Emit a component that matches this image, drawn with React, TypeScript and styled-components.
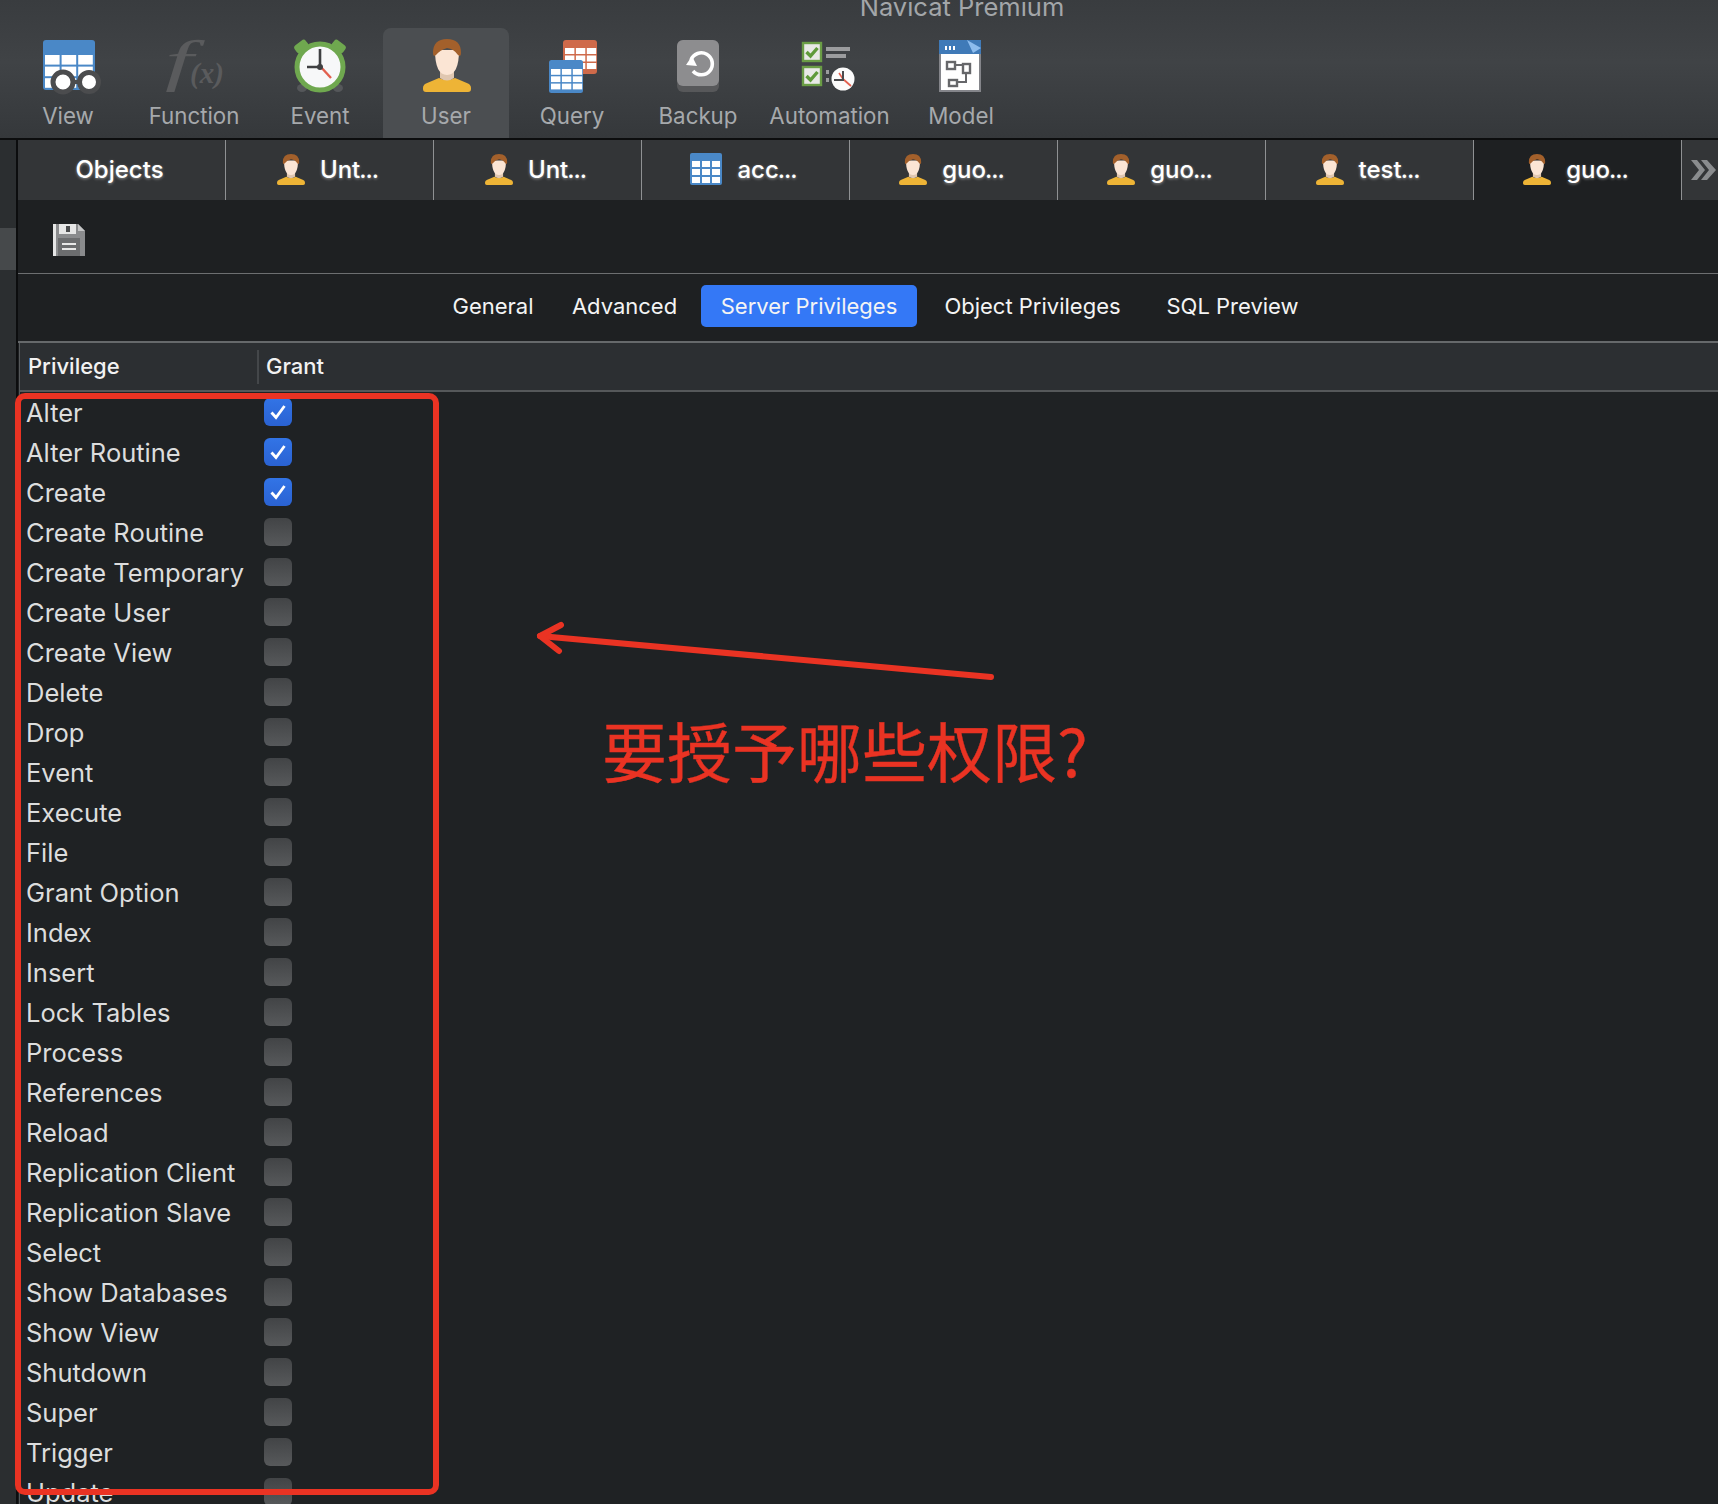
import React from "react";
import styled, { createGlobalStyle } from "styled-components";

const SANS = `Inter, "Noto Sans", "Liberation Sans", "Noto Sans CJK SC", sans-serif`;

const Global = createGlobalStyle`
  html, body { margin: 0; padding: 0; background: #1f2224; }
  * { box-sizing: border-box; }
`;

const Page = styled.div`
  position: relative;
  width: 1718px;
  height: 1504px;
  overflow: hidden;
  background: #1e2022;
  font-family: ${SANS};
`;

const Toolbar = styled.header`
  height: 140px;
  display: flow-root;
  background: linear-gradient(180deg, #393c3f 0%, #404346 45%, #35383b 100%);
  border-bottom: 2px solid #0c0d0e;
`;

const WindowTitle = styled.div`
  height: 22px;
  margin-top: -6px;
  margin-bottom: 12px;
  padding-left: 206px;
  text-align: center;
  font-size: 25.5px;
  line-height: 26px;
  color: #a3a6a9;
`;

const ToolRow = styled.div`
  display: flex;
  padding-left: 5px;
  height: 110px;
`;

const ToolItem = styled.div<{ $w: number; $active?: boolean }>`
  width: ${(p) => p.$w}px;
  height: 110px;
  padding-top: 10px;
  display: flex;
  flex-direction: column;
  align-items: center;
  border-radius: 8px 8px 0 0;
  background: ${(p) => (p.$active ? "#4b4e51" : "transparent")};
`;

const ToolLabel = styled.span`
  margin-top: 8px;
  font-size: 22.3px;
  line-height: 28px;
  color: #a6a9ac;
  white-space: nowrap;
`;

const Main = styled.div`
  display: flex;
  height: 1364px;
`;

const Rail = styled.aside`
  width: 18px;
  flex: none;
  background: #2b2e30;
  border-right: 2px solid #0c0d0e;
  padding-top: 88px;
`;

const RailHandle = styled.div`
  height: 42px;
  background: #46494b;
`;

const Content = styled.main`
  flex: 1;
  min-width: 0;
  display: flex;
  flex-direction: column;
`;

const TabBar = styled.nav`
  display: flex;
  flex: none;
  height: 60px;
  background: #333537;
`;

const Tab = styled.div<{ $active?: boolean }>`
  width: 208px;
  flex: none;
  display: flex;
  align-items: center;
  justify-content: center;
  gap: 15px;
  padding: 0 4px 2px 0;
  border-right: 1px solid #8f9193;
  background: ${(p) => (p.$active ? "#1e2022" : "transparent")};
  color: #fff;
  font-size: 24px;
  font-weight: 500;
  text-shadow: 0 1px 3px rgba(255, 255, 255, 0.45);
`;

const TabDots = styled.span`
  letter-spacing: -1px;
  margin-left: -1px;
`;

const TabMore = styled.div`
  flex: 1;
  display: flex;
  align-items: center;
  padding-left: 8px;
`;

const SaveBar = styled.div`
  flex: none;
  height: 74px;
  padding: 24px 0 0 35px;
  border-bottom: 1px solid #6d6f71;
`;

const SegmentRow = styled.div`
  flex: none;
  height: 69px;
  display: flex;
  align-items: center;
  padding: 0 0 4px 414px;
  border-bottom: 2px solid #66696b;
`;

const Segment = styled.div<{ $w: number; $ml?: number; $on?: boolean }>`
  width: ${(p) => p.$w}px;
  margin-left: ${(p) => p.$ml ?? 0}px;
  height: 42px;
  display: flex;
  align-items: center;
  justify-content: center;
  border-radius: 5px;
  font-size: 22px;
  color: #f4f4f4;
  white-space: nowrap;
  background: ${(p) => (p.$on ? "#3478f6" : "transparent")};
`;

const Table = styled.section`
  margin-left: 1px;
  border-left: 1px solid #55585a;
  flex: 1;
  min-height: 0;
  overflow: hidden;
  background: #1f2224;
`;

const HeadRow = styled.div`
  height: 49px;
  display: flex;
  align-items: center;
  background: #2c2f32;
  border-bottom: 2px solid #55585a;
`;

const HeadCell = styled.div<{ $w?: number; $divider?: boolean }>`
  width: ${(p) => (p.$w ? `${p.$w}px` : "auto")};
  height: 34px;
  line-height: 32px;
  padding-left: ${(p) => (p.$divider ? "7px" : "8px")};
  border-left: ${(p) => (p.$divider ? "2px solid #44474a" : "none")};
  font-size: 22px;
  font-weight: 500;
  color: #f2f2f2;
`;

const Row = styled.div`
  height: 40px;
  display: flex;
  align-items: center;
  padding-left: 6px;
`;

const RowName = styled.div`
  width: 238px;
  flex: none;
  padding-top: 2px;
  font-size: 25.5px;
  line-height: 38px;
  color: #dcdddd;
  white-space: nowrap;
`;

const Check = styled.div<{ $on?: boolean }>`
  width: 28px;
  height: 28px;
  flex: none;
  display: flex;
  align-items: center;
  justify-content: center;
  border-radius: 6px;
  background: ${(p) =>
    p.$on
      ? "linear-gradient(180deg, #3274e6 0%, #2a62d2 100%)"
      : "linear-gradient(180deg, #424446 0%, #57595b 100%)"};
`;

const RedFrame = styled.div`
  position: absolute;
  left: 15px;
  top: 393px;
  width: 424px;
  height: 1102px;
  border: 6px solid #ea3323;
  border-radius: 10px;
`;

const ArrowDrawing = styled.svg`
  position: absolute;
  left: 530px;
  top: 615px;
`;

const Note = styled.div`
  position: absolute;
  left: 602px;
  top: 702px;
  font-family: "Noto Sans CJK SC", sans-serif;
  font-size: 65px;
  font-weight: 400;
  -webkit-text-stroke: 0.35px #ea3323;
  line-height: 94px;
  color: #ea3323;
  white-space: nowrap;
`;

const CellGrid = ({ x, y, cols, rows, w, h, gap = 2 }: { x: number; y: number; cols: number; rows: number; w: number; h: number; gap?: number }) => (
  <>
    {Array.from({ length: rows }).flatMap((_, r) =>
      Array.from({ length: cols }).map((__, c) => (
        <rect key={`${r}-${c}`} x={x + c * (w + gap)} y={y + r * (h + gap)} width={w} height={h} fill="#fff" />
      ))
    )}
  </>
);

const Icon = ({ children }: { children: React.ReactNode }) => (
  <svg width="64" height="56" viewBox="0 0 64 56" style={{ overflow: "visible" }}>{children}</svg>
);

const ViewIcon = () => (
  <Icon>
    <rect x="7" y="2" width="52" height="50" rx="3" fill="#4a88c7" />
    <CellGrid x={9} y={17} cols={3} rows={3} w={14.6} h={9.6} gap={2} />
    <rect x="30" y="42" width="18" height="4" fill="#4b4c4e" />
    <circle cx="27" cy="44" r="10" fill="#fff" stroke="#4b4c4e" strokeWidth="5" />
    <circle cx="53" cy="44" r="9.5" fill="#fff" stroke="#4b4c4e" strokeWidth="5" />
  </Icon>
);

const FunctionIcon = () => (
  <Icon>
    <text transform="translate(3 42) scale(1.75 1)" fontFamily="'Liberation Serif', serif" fontStyle="italic" fontSize="58" fill="#5a5b5d">f</text>
    <text x="28" y="44.5" fontFamily="'Liberation Serif', serif" fontStyle="italic" fontSize="29" fontWeight="bold" fill="#5a5b5d">(x)</text>
  </Icon>
);

const EventIcon = () => (
  <Icon>
    <ellipse cx="14" cy="50" rx="5" ry="4" fill="#55575a" />
    <ellipse cx="50" cy="50" rx="5" ry="4" fill="#55575a" />
    <rect x="6" y="4" width="14" height="9" rx="3" transform="rotate(-38 13 8)" fill="#6fa84f" />
    <rect x="44" y="4" width="14" height="9" rx="3" transform="rotate(38 51 8)" fill="#6fa84f" />
    <circle cx="32" cy="29" r="23" fill="#f7f8f9" stroke="#6fa84f" strokeWidth="5" />
    <path d="M32 28 L43 40" stroke="#e2604f" strokeWidth="2.4" />
    <path d="M32 11 V29 H19" stroke="#3f4042" strokeWidth="2.6" fill="none" />
    <circle cx="32" cy="29" r="3" fill="#3f4042" />
  </Icon>
);

const UserShape = () => (
  <>
    <path d="M9 50 Q9 47 12 45.5 L25 40 Q33 44 41 40 L54 45.5 Q57 47 57 50 V51 Q57 54 54 54 H12 Q9 54 9 51 Z" fill="#eeb436" />
    <path d="M26 32 H40 V40 Q33 45 26 40 Z" fill="#e0c7b0" />
    <path d="M21 12 Q21 37 33 37 Q45 37 45 12 Z" fill="#fbe5d4" />
    <path d="M19 15 Q19 1 33 1 Q47 1 47 15 Q47 17 46 18 L44 17 Q40 11 33 10 Q26 12 22 17 L20 18 Q19 17 19 15 Z" fill="#a3602b" />
  </>
);

const UserIcon = () => <Icon><UserShape /></Icon>;

const TabUserIcon = () => (
  <svg width="28" height="31" viewBox="9 1 48 53"><UserShape /></svg>
);

const TabTableIcon = () => (
  <svg width="32" height="32" viewBox="0 0 32 32">
    <rect width="32" height="32" rx="2" fill="#4a88c7" />
    <CellGrid x={2} y={8} cols={3} rows={3} w={8} h={6} gap={2} />
  </svg>
);

const QueryIcon = () => (
  <Icon>
    <rect x="23" y="2" width="34" height="34" rx="3" fill="#cf6a4a" />
    <CellGrid x={25} y={10} cols={3} rows={3} w={9.4} h={6} gap={1.5} />
    <rect x="9" y="22" width="34" height="33" rx="2.5" fill="#4a88c7" />
    <CellGrid x={11} y={31} cols={3} rows={3} w={9.4} h={5.8} gap={1.5} />
  </Icon>
);

const BackupIcon = () => (
  <Icon>
    <rect x="11" y="2" width="42" height="52" rx="6" fill="#57585a" />
    <rect x="11" y="2" width="42" height="46" rx="6" fill="#8d8d8f" />
    <path d="M25 22 A11 11 0 1 1 27 33" fill="none" stroke="#fff" strokeWidth="3.6" />
    <path d="M20 27 L26 18 L31 28 Z" fill="#fff" />
  </Icon>
);

const CheckBox = ({ y }: { y: number }) => (
  <>
    <rect x="3" y={y} width="18" height="18" fill="#e8e9e6" stroke="#6a9d45" strokeWidth="2.4" />
    <path d={`M6.5 ${y + 9} L10.5 ${y + 13} L17.5 ${y + 5}`} fill="none" stroke="#5f9a3a" strokeWidth="3.4" />
  </>
);

const AutomationIcon = () => (
  <Icon>
    <g transform="translate(2 0)">
      <CheckBox y={5} />
      <CheckBox y={29} />
      <rect x="26" y="9" width="24" height="4" fill="#9b9c9e" />
      <rect x="26" y="16" width="20" height="4" fill="#9b9c9e" />
      <rect x="26" y="32" width="3" height="4" fill="#9b9c9e" />
      <rect x="26" y="40" width="3" height="4" fill="#9b9c9e" />
      <circle cx="43" cy="41" r="11.5" fill="#fbfbfb" />
      <path d="M43 41 L51 48" stroke="#e2604f" strokeWidth="1.8" />
      <path d="M43 41 L39 35" stroke="#e2604f" strokeWidth="1.6" />
      <path d="M43 33 V42 H34" stroke="#4a4b4d" strokeWidth="2" fill="none" />
    </g>
  </Icon>
);

const ModelIcon = () => (
  <Icon>
    <g transform="translate(-1 0)">
      <rect x="11" y="2" width="42" height="52" fill="#84858a" />
      <rect x="13" y="15" width="38" height="37" fill="#fff" />
      <rect x="11" y="2" width="42" height="14" fill="#3f7ab8" />
      <path d="M39 2 L53 10 L45 15 Z" fill="#8cbcee" />
      <rect x="17" y="8" width="2" height="4" fill="#fff" />
      <rect x="21" y="8" width="2" height="4" fill="#fff" />
      <rect x="25" y="8" width="2" height="4" fill="#fff" />
      <g fill="none" stroke="#66676a" strokeWidth="2.4">
        <rect x="19" y="24" width="8" height="7" />
        <rect x="35" y="26" width="7" height="9" />
        <rect x="21" y="42" width="8" height="6" />
        <path d="M27 27 H35 M38 35 V44 H29" strokeWidth="2" />
      </g>
    </g>
  </Icon>
);

const SaveIcon = () => (
  <svg width="32" height="32" viewBox="0 0 32 32" style={{ display: "block" }}>
    <path fill="#8a8b8d" d="M0 0 H25 L32 7 V32 H0 Z" />
    <rect x="0" y="0" width="3" height="32" fill="#e6e6e6" />
    <path d="M25 0 L32 7 H25 Z" fill="#c4c4c5" />
    <rect x="6" y="0" width="17" height="10" fill="#e6e6e6" />
    <rect x="13" y="2" width="4" height="6" fill="#4a4b4d" />
    <rect x="5" y="14" width="22" height="18" fill="#6c6d6f" />
    <path d="M9 20 H23 M9 25 H23" stroke="#e8e8e8" strokeWidth="2" />
  </svg>
);

const Tick = () => (
  <svg width="20" height="20" viewBox="0 0 20 20">
    <path d="M3.5 10.5 L8 15.5 L16.5 4" fill="none" stroke="#fff" strokeWidth="2.8" />
  </svg>
);

const Chevrons = () => (
  <svg width="28" height="24" viewBox="0 0 28 24">
    <path d="M1 2 H7 L15 12 L7 22 H1 L9 12 Z M11 2 H17 L26 12 L17 22 H11 L19 12 Z" fill="#8a8c8e" />
  </svg>
);

const tools = [
  { label: "View", w: 126, icon: <ViewIcon /> },
  { label: "Function", w: 126, icon: <FunctionIcon /> },
  { label: "Event", w: 126, icon: <EventIcon /> },
  { label: "User", w: 126, icon: <UserIcon />, active: true },
  { label: "Query", w: 126, icon: <QueryIcon /> },
  { label: "Backup", w: 126, icon: <BackupIcon /> },
  { label: "Automation", w: 137, icon: <AutomationIcon /> },
  { label: "Model", w: 126, icon: <ModelIcon /> },
];

const tabs = [
  { label: "Objects" },
  { label: "Unt", cut: true, icon: <TabUserIcon /> },
  { label: "Unt", cut: true, icon: <TabUserIcon /> },
  { label: "acc", cut: true, icon: <TabTableIcon /> },
  { label: "guo", cut: true, icon: <TabUserIcon /> },
  { label: "guo", cut: true, icon: <TabUserIcon /> },
  { label: "test", cut: true, icon: <TabUserIcon /> },
  { label: "guo", cut: true, icon: <TabUserIcon />, active: true },
];

const segments = [
  { label: "General", w: 122 },
  { label: "Advanced", w: 141 },
  { label: "Server Privileges", w: 216, ml: 6, on: true },
  { label: "Object Privileges", w: 231 },
  { label: "SQL Preview", w: 169 },
];

const privileges = [
  "Alter", "Alter Routine", "Create", "Create Routine", "Create Temporary", "Create User", "Create View",
  "Delete", "Drop", "Event", "Execute", "File", "Grant Option", "Index", "Insert", "Lock Tables", "Process",
  "References", "Reload", "Replication Client", "Replication Slave", "Select", "Show Databases", "Show View",
  "Shutdown", "Super", "Trigger", "Update",
];

export default function App() {
  return (
    <Page>
      <Global />
      <Toolbar>
        <WindowTitle>Navicat Premium</WindowTitle>
        <ToolRow>
          {tools.map((t) => (
            <ToolItem key={t.label} $w={t.w} $active={t.active}>
              {t.icon}
              <ToolLabel>{t.label}</ToolLabel>
            </ToolItem>
          ))}
        </ToolRow>
      </Toolbar>
      <Main>
        <Rail><RailHandle /></Rail>
        <Content>
          <TabBar>
            {tabs.map((t, i) => (
              <Tab key={i} $active={t.active}>
                {t.icon}
                <span>{t.label}{t.cut && <TabDots>...</TabDots>}</span>
              </Tab>
            ))}
            <TabMore><Chevrons /></TabMore>
          </TabBar>
          <SaveBar><SaveIcon /></SaveBar>
          <SegmentRow>
            {segments.map((s) => (
              <Segment key={s.label} $w={s.w} $ml={s.ml} $on={s.on}>{s.label}</Segment>
            ))}
          </SegmentRow>
          <Table>
            <HeadRow>
              <HeadCell $w={237}>Privilege</HeadCell>
              <HeadCell $divider>Grant</HeadCell>
            </HeadRow>
            {privileges.map((name, i) => (
              <Row key={name}>
                <RowName>{name}</RowName>
                <Check $on={i < 3}>{i < 3 && <Tick />}</Check>
              </Row>
            ))}
          </Table>
        </Content>
      </Main>
      <RedFrame />
      <ArrowDrawing width="470" height="75" viewBox="0 0 470 75">
        <path d="M10 21 L461 62" stroke="#ea3323" strokeWidth="6" strokeLinecap="round" fill="none" />
        <path d="M31 10 L10 21 L29 36" stroke="#ea3323" strokeWidth="6" strokeLinecap="round" strokeLinejoin="round" fill="none" />
      </ArrowDrawing>
      <Note>要授予哪些权限?</Note>
    </Page>
  );
}
